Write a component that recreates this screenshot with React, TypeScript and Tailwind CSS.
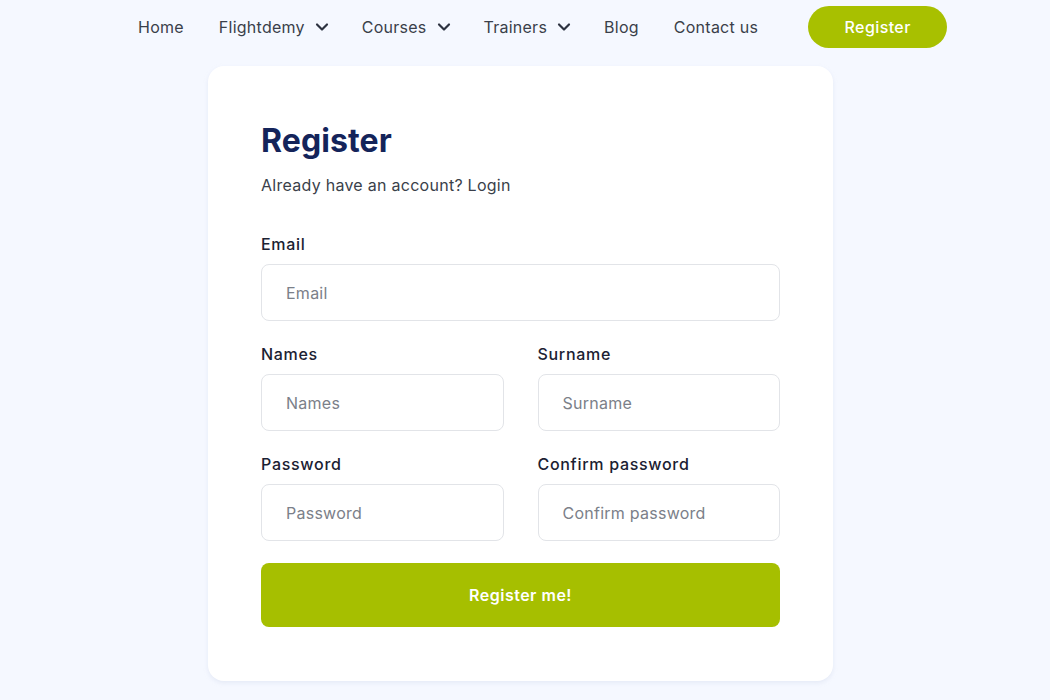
import { ChevronDown } from "lucide-react";

const navItems = [
  { label: "Home", menu: false },
  { label: "Flightdemy", menu: true },
  { label: "Courses", menu: true },
  { label: "Trainers", menu: true },
  { label: "Blog", menu: false },
  { label: "Contact us", menu: false },
];

function Field({ label, placeholder }: { label: string; placeholder: string }) {
  return (
    <div className="flex flex-col gap-2">
      <label className="text-[16px] leading-6 font-medium tracking-[0.7px] text-[#1b2132]">
        {label}
      </label>
      <input
        placeholder={placeholder}
        className="h-[57px] w-full rounded-lg border border-[#e2e4e8] bg-white px-6 text-[16px] tracking-[0.25px] text-[#1b2132] placeholder:text-[#7b8089] outline-none"
      />
    </div>
  );
}

export default function App() {
  return (
    <div
      className="min-h-[700px] bg-[#f5f8ff] text-[#3a3f4a]"
      style={{ fontFamily: "Inter, 'Noto Sans', sans-serif" }}
    >
      <nav className="flex h-[54px] items-center pl-[138px]">
        <ul className="flex items-center gap-[35px] text-[16px] tracking-[0.25px] text-[#3a3f4a]">
          {navItems.map((item) => (
            <li key={item.label} className="flex items-center gap-[7px]">
              <span>{item.label}</span>
              {item.menu && (
                <ChevronDown size={20} strokeWidth={2.6} className="-mr-[5px] text-[#2d3240]" />
              )}
            </li>
          ))}
        </ul>
        <button className="ml-[50px] h-[42px] w-[139px] rounded-full bg-[#a8c000] text-[16px] font-medium tracking-[0.4px] text-white">
          Register
        </button>
      </nav>

      <div className="flex justify-start pl-[208px] pt-[12px] pb-[18px]">
        <div className="w-[625px] rounded-2xl bg-white px-[53px] pt-[55px] pb-[54px] shadow-[0_2px_4px_rgba(200,210,230,0.35)]">
          <h1 className="text-[32px] leading-10 font-bold tracking-[0.1px] text-[#14245a]">Register</h1>
          <p className="mt-[12px] text-[16px] leading-6 tracking-[0.27px] text-[#3a3f4a]">
            Already have an account? Login
          </p>

          <div className="mt-[35px] flex flex-col gap-[21px]">
            <Field label="Email" placeholder="Email" />
            <div className="grid grid-cols-2 gap-x-[34px] gap-y-[21px]">
              <Field label="Names" placeholder="Names" />
              <Field label="Surname" placeholder="Surname" />
              <Field label="Password" placeholder="Password" />
              <Field label="Confirm password" placeholder="Confirm password" />
            </div>
            <button className="mt-[1px] h-[64px] w-full rounded-lg bg-[#a6bf00] text-[16px] font-semibold tracking-[0.5px] text-white">
              Register me!
            </button>
          </div>
        </div>
      </div>
    </div>
  );
}
